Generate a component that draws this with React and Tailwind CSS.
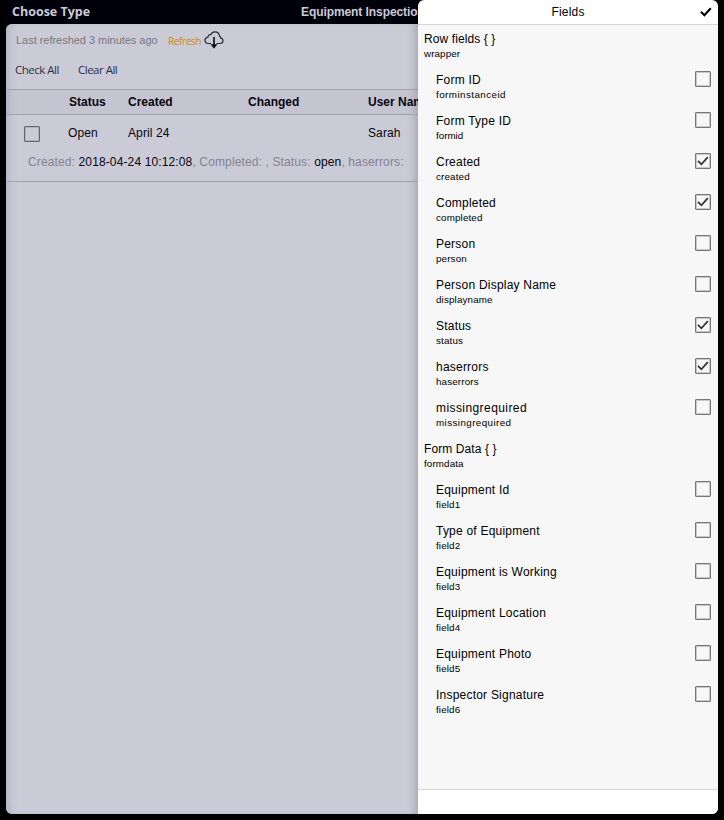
const groups = [
  {
    title: "Row fields { }",
    name: "wrapper",
    fields: [
      ["Form ID", "forminstanceid", false],
      ["Form Type ID", "formid", false],
      ["Created", "created", true],
      ["Completed", "completed", true],
      ["Person", "person", false],
      ["Person Display Name", "displayname", false],
      ["Status", "status", true],
      ["haserrors", "haserrors", true],
      ["missingrequired", "missingrequired", false],
    ],
  },
  {
    title: "Form Data { }",
    name: "formdata",
    fields: [
      ["Equipment Id", "field1", false],
      ["Type of Equipment", "field2", false],
      ["Equipment is Working", "field3", false],
      ["Equipment Location", "field4", false],
      ["Equipment Photo", "field5", false],
      ["Inspector Signature", "field6", false],
    ],
  },
];

const tracking = {
  wrapper: "tracking-[0.1px]",
  formdata: "tracking-[0.13px]",
  formid: "tracking-[0px]",
  forminstanceid: "tracking-[0.45px]",
  missingrequired: "tracking-[0.42px]",
};

function Check({ className, width = 2 }) {
  return (
    <svg className={className} viewBox="0 0 12 10" fill="none" stroke="currentColor" strokeWidth={width}>
      <path d="M1 4.8 4.4 8.3 10.8 1.2" />
    </svg>
  );
}

function Checkbox({ checked }) {
  return (
    <span className="mt-[5px] flex size-4 shrink-0 items-center justify-center rounded-[1px] border border-[#777] text-[#333] shadow-[inset_0_0_0_1px_#c9c9c9]">
      {checked && <Check className="h-[10px] w-3" width={1.8} />}
    </span>
  );
}

function Labels({ title, name, titleTracking = "tracking-[0.22px]" }) {
  return (
    <div className="flex flex-col pt-[6px] whitespace-nowrap text-black">
      <span className={`h-4 text-[12px] leading-4 ${name === "missingrequired" ? "tracking-[0.42px]" : titleTracking}`}>{title}</span>
      <span className={`h-3 text-[9.8px] leading-[14px] ${tracking[name] || "tracking-[0.15px]"}`}>{name}</span>
    </div>
  );
}

function Drawer() {
  return (
    <aside className="absolute top-0 left-[418px] flex h-[814px] w-[300px] flex-col overflow-hidden rounded-r-[6px] rounded-tl-[6px] bg-white">
      <header className="relative flex h-[25px] shrink-0 items-center justify-center border-b border-[#d5d5d5] text-[12px] tracking-[0.2px] text-black">
        <span>Fields</span>
        <Check className="absolute top-[7px] right-[6px] h-[10px] w-3 text-black" width={2.1} />
      </header>
      <div className="flex grow flex-col bg-[#f7f7f7]">
        {groups.map((group) => (
          <section key={group.name}>
            <div className="h-[41px] pl-[6px]">
              <Labels title={group.title} name={group.name} titleTracking="tracking-[0.1px]" />
            </div>
            {group.fields.map(([title, name, checked]) => (
              <div key={name} className="flex h-[41px] items-start justify-between pr-[7px] pl-[18px]">
                <Labels title={title} name={name} />
                <Checkbox checked={checked} />
              </div>
            ))}
          </section>
        ))}
      </div>
      <footer className="h-[25px] shrink-0 border-t border-[#d5d5d5] bg-white" />
    </aside>
  );
}

function CloudDownload() {
  return (
    <svg className="ml-[3px] h-[18px] w-5" viewBox="0 0 20 18" fill="none" stroke="#292932" strokeWidth="1.2">
      <path d="M7 12.5H4.2C2.3 12.4 1 11 1 9.3 1 7.5 2.3 6.4 4 6.2 4 4.3 5.1 3.3 6.8 3.6 7.6 1.7 9.1.8 11 .8c2.6 0 4.3 1.8 4.5 4.3 1 .3 1.2 1 1.2 2C18.2 7.3 19 8.3 19 9.6c0 1.8-1.2 2.9-3 2.9h-3.5" />
      <path d="M10 6v9" stroke="#080812" strokeWidth="1.6" />
      <path d="M6.5 13.2h7L10 17.4z" fill="#080812" stroke="none" />
    </svg>
  );
}

export default function App() {
  return (
    <div className="relative h-[820px] w-[724px] overflow-hidden bg-black font-['Liberation_Sans',Arial,sans-serif] text-[12px]">
      <div className="ml-[6px] flex h-[814px] w-[412px] flex-col bg-[#00000b]">
        <header className="flex h-6 shrink-0 items-center justify-between pl-[6px] font-bold whitespace-nowrap text-[#cbcbd8]">
          <span className="pt-px font-['Open_Sans','Noto_Sans',sans-serif] text-[12.5px]">Choose Type</span>
          <span className="w-[117px] tracking-[-0.08px]">Equipment Inspection</span>
        </header>
        <main className="flex grow flex-col rounded-l-[6px] bg-[#cbcbd8] shadow-[inset_9px_0_8px_-6px_#b4b4c1,inset_-9px_0_9px_-6px_#a5a5b2]">
          <div className="flex h-8 items-center pl-[10px] text-[11px] whitespace-nowrap">
            <span className="w-[152px] tracking-[-0.03px] text-[#777780]">Last refreshed 3 minutes ago</span>
            <span className="w-[33px] pt-[3px] font-['Open_Sans','Noto_Sans',sans-serif] text-[10px] tracking-[-0.4px] text-[#cf880c]">Refresh</span>
            <CloudDownload />
          </div>
          <div className="flex h-[33px] items-start gap-5 pt-[6px] pl-[9px] font-['Open_Sans','Noto_Sans',sans-serif] text-[11.5px] leading-4 tracking-[-0.5px] whitespace-nowrap text-[#30303a]">
            <span className="w-[43px]">Check All</span>
            <span>Clear All</span>
          </div>
          <div className="grid h-[26px] shrink-0 grid-cols-[59px_120px_120px_50px] items-center border-y border-[#a1a1af] bg-[#9090a0]/10 pl-[63px] font-bold whitespace-nowrap text-[#05050c]">
            <span>Status</span>
            <span>Created</span>
            <span>Changed</span>
            <span>User Name</span>
          </div>
          <div className="h-[67px] shrink-0 border-b border-[#a1a1af] whitespace-nowrap text-[#05050c]">
            <div className="flex h-9 items-center pl-[18px]">
              <span className="mt-px mr-7 size-4 rounded-[1px] border border-[#666673] shadow-[inset_0_0_0_1px_#b2b2bf]" />
              <span className="w-[60px] tracking-[0.1px]">Open</span>
              <span className="w-[240px] tracking-[0.1px]">April 24</span>
              <span className="tracking-[0.1px]">Sarah</span>
            </div>
            <p className="pt-[3px] pl-[22px] leading-4 tracking-[0.13px] text-[#83838f]">
              Created: <span className="text-[#05050c]">2018-04-24 10:12:08</span>, Completed: , Status:{" "}
              <span className="text-[#05050c]">open</span>, haserrors:
            </p>
          </div>
        </main>
      </div>
      <Drawer />
    </div>
  );
}
